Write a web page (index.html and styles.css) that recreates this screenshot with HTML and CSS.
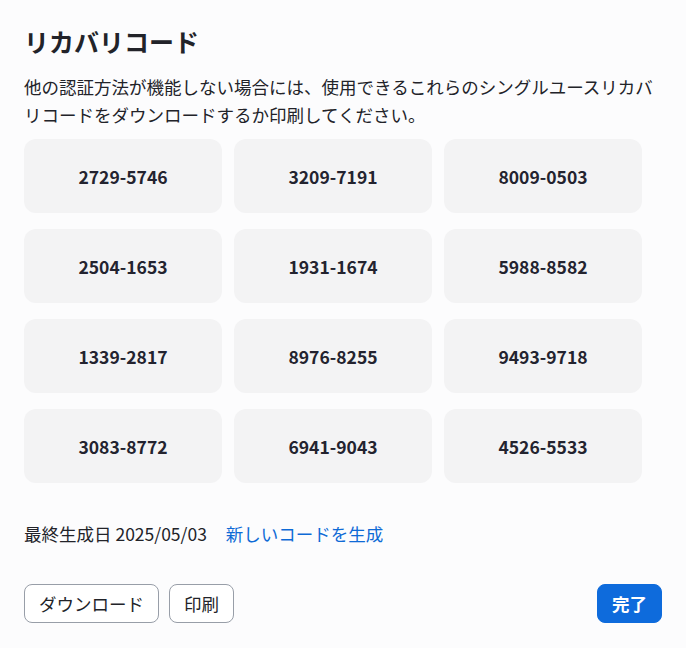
FILE: index.html
```html
<!DOCTYPE html>
<html lang="ja">
<head>
<meta charset="utf-8">
<title>リカバリコード</title>
<link rel="stylesheet" href="styles.css">
</head>
<body>
<div class="dialog">
  <h1 class="title">リカバリコード</h1>
  <p class="desc">他の認証方法が機能しない場合には、使用できるこれらのシングルユースリカバリコードをダウンロードするか印刷してください。</p>
  <div class="codes">
    <div class="code">2729-5746</div>
    <div class="code">3209-7191</div>
    <div class="code">8009-0503</div>
    <div class="code">2504-1653</div>
    <div class="code">1931-1674</div>
    <div class="code">5988-8582</div>
    <div class="code">1339-2817</div>
    <div class="code">8976-8255</div>
    <div class="code">9493-9718</div>
    <div class="code">3083-8772</div>
    <div class="code">6941-9043</div>
    <div class="code">4526-5533</div>
  </div>
  <div class="meta">
    <span class="date">最終生成日 2025/05/03</span>
    <a class="link" href="#">新しいコードを生成</a>
  </div>
  <div class="actions">
    <div class="left">
      <button class="btn">ダウンロード</button>
      <button class="btn">印刷</button>
    </div>
    <button class="btn primary">完了</button>
  </div>
</div>
</body>
</html>
```

FILE: styles.css
```css
html, body {
  margin: 0;
  padding: 0;
  background: #ffffff;
}
body {
  font-family: "Noto Sans CJK JP", "Noto Sans", sans-serif;
  color: #222329;
}
.dialog {
  width: 686px;
  height: 648px;
  box-sizing: border-box;
  background: #fcfcfd;
  padding: 22px 24px 0 24px;
}
.title {
  margin: 0;
  font-size: 25px;
  font-weight: 700;
  line-height: 38px;
  color: #222329;
}
.desc {
  margin: 13px 0 0 0;
  width: 638px;
  font-size: 17.5px;
  line-height: 28px;
  color: #222329;
}
.codes {
  margin-top: 10px;
  display: grid;
  grid-template-columns: repeat(3, 198px);
  grid-auto-rows: 74px;
  column-gap: 12px;
  row-gap: 16px;
}
.code {
  background: #f3f3f4;
  border-radius: 12px;
  display: flex;
  align-items: center;
  justify-content: center;
  font-size: 17.5px;
  font-weight: 700;
  color: #23232f;
}
.meta {
  margin-top: 38px;
  display: flex;
  align-items: center;
  gap: 19px;
  font-size: 17.5px;
  line-height: 26px;
}
.link {
  color: #0e6ad6;
  text-decoration: none;
}
.actions {
  margin-top: 37px;
  width: 638px;
  display: flex;
  justify-content: space-between;
  align-items: center;
}
.left {
  display: flex;
  gap: 10px;
}
.btn {
  height: 39px;
  padding: 0 14px;
  border: 1px solid #989ea8;
  border-radius: 8px;
  background: #ffffff;
  font-family: "Noto Sans CJK JP", "Noto Sans", sans-serif;
  font-size: 17.5px;
  color: #222329;
  line-height: 1;
}
.primary {
  background: #0e6bdc;
  border-color: #0e6bdc;
  color: #ffffff;
  font-weight: 700;
}
```
